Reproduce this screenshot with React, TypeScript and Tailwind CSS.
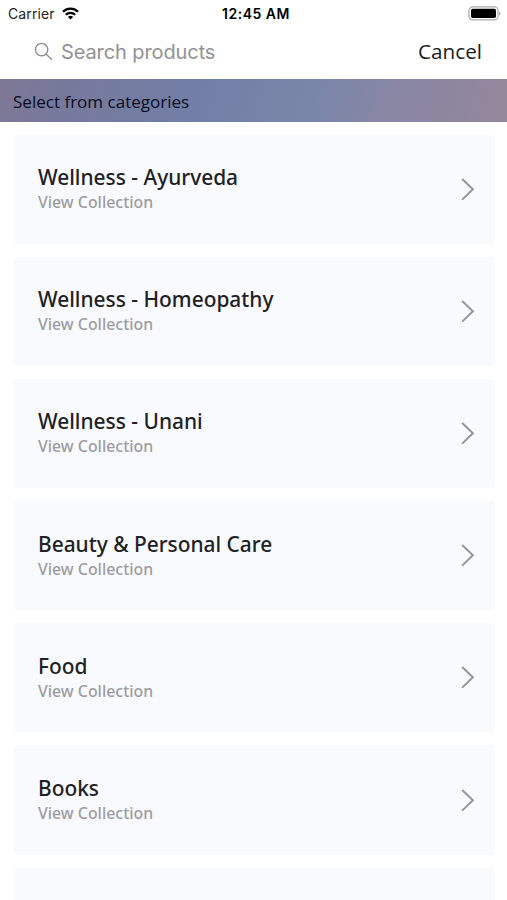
const categories = [
  'Wellness - Ayurveda',
  'Wellness - Homeopathy',
  'Wellness - Unani',
  'Beauty & Personal Care',
  'Food',
  'Books',
];

function StatusBar() {
  return (
    <header className="grid h-7 shrink-0 grid-cols-3 items-center pl-2 pr-[6px] font-['Inter',sans-serif] text-[14px] leading-4 text-[#222]">
      <div className="flex items-center gap-[7px]">
        <span className="tracking-[0.1px]">Carrier</span>
        <svg className="-translate-y-px" width="17" height="13" viewBox="0 0 17 13" fill="none" stroke="#000" strokeWidth="2.2">
          <path d="M1 4.8a10.6 10.6 0 0 1 15 0" />
          <path d="M3.8 7.8a6.7 6.7 0 0 1 9.4 0" />
          <path d="M8.5 12.6 5.9 10a3.7 3.7 0 0 1 5.2 0z" fill="#000" stroke="none" />
        </svg>
      </div>
      <span className="whitespace-nowrap pl-[3px] text-center text-[14px] font-semibold tracking-[0.5px] text-black">12:45 AM</span>
      <svg className="-translate-y-px justify-self-end" width="33" height="15" viewBox="0 0 33 15">
        <rect x="1" y="0.9" width="29" height="13" rx="3.8" fill="#fff" stroke="#aaa" strokeWidth="1.2" />
        <rect x="3" y="2.8" width="25" height="9.2" rx="1.8" fill="#000" />
        <path d="M31.2 5.2c1.7.8 1.7 3.6 0 4.4z" fill="#999" />
      </svg>
    </header>
  );
}

function SearchBar() {
  return (
    <div className="flex h-[51px] shrink-0 items-center pl-[34px] pr-[25px] pb-1">
      <svg width="19" height="19" viewBox="0 0 19 19" fill="none" stroke="#8e8e93" strokeWidth="1.4" strokeLinecap="round">
        <circle cx="7.6" cy="7.6" r="6.2" />
        <path d="m12.2 12.2 5.3 5.1" />
      </svg>
      <span className="ml-2 flex-1 font-['Inter',sans-serif] text-[20px] leading-6 tracking-[-0.1px] text-[#929294]">Search products</span>
      <button className="pb-[2px] text-[20.7px] leading-6 text-[#1c1c1c]">Cancel</button>
    </div>
  );
}

function CategoryCard({ name }: { name: string }) {
  return (
    <li className="flex h-[109.1px] shrink-0 items-center justify-between rounded-[3px] bg-[#f9fafe] pl-6 pr-5">
      <div className="flex flex-col pb-[2.6px] font-['Noto_Sans',sans-serif]">
        <span className="text-[20.9px] font-medium leading-7 text-[#202124]">{name}</span>
        <span className="text-[15.9px] font-medium leading-[22px] text-[#9c9c9e]">View Collection</span>
      </div>
      <svg className="mb-px" width="14" height="22" viewBox="0 0 14 22" fill="none" stroke="#969696" strokeWidth="2" strokeLinecap="round">
        <path d="m1.7 1.5 10.2 9.8-10.2 9.8" />
      </svg>
    </li>
  );
}

export default function App() {
  return (
    <div className="flex h-[900px] w-full flex-col overflow-hidden bg-white font-['Open_Sans',sans-serif]">
      <StatusBar />
      <SearchBar />
      <div className="flex h-[43px] shrink-0 items-center bg-[linear-gradient(105deg,#7f7896_0%,#77799c_12%,#727ea6_38%,#7a86a9_62%,#8886a4_76%,#94879b_100%)] pl-[13px] pt-[3px] text-[17.05px] leading-6 text-[#080c1c]">
        Select from categories
      </div>
      <ul className="flex flex-col gap-[13px] pl-[14px] pr-[12px] pt-[13px]">
        {categories.map((name) => (
          <CategoryCard key={name} name={name} />
        ))}
        <li className="h-[109px] shrink-0 rounded-[3px] bg-[#f9fafe]" />
      </ul>
    </div>
  );
}
